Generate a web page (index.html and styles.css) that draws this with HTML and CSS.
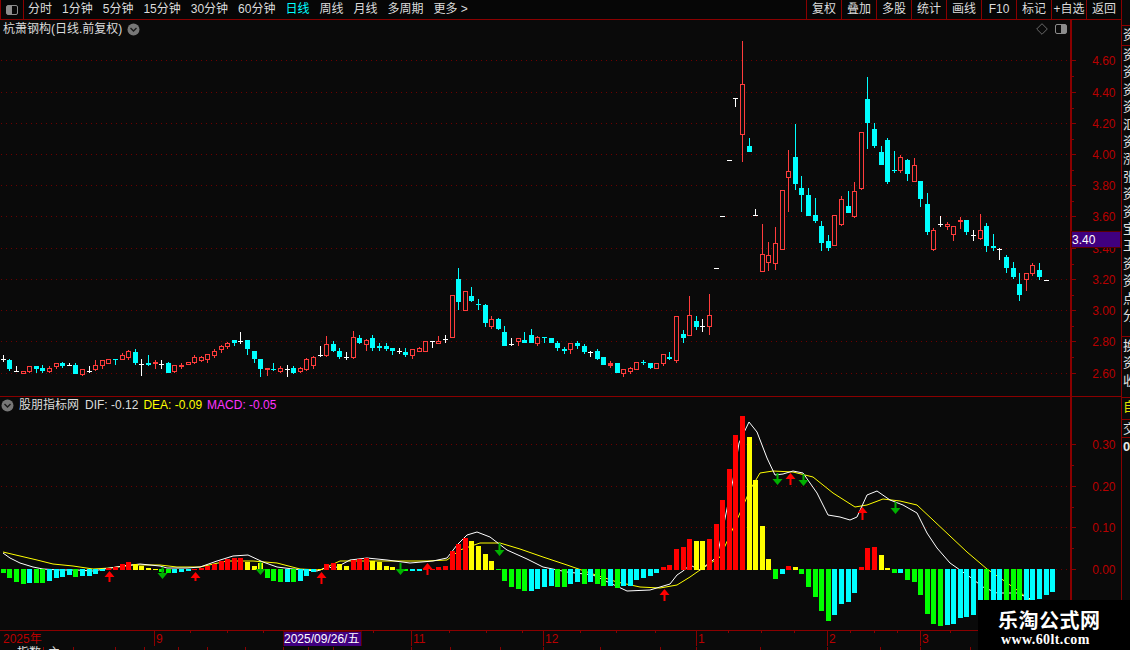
FILE: index.html
```html
<!DOCTYPE html>
<html lang="zh">
<head>
<meta charset="utf-8">
<title>杭萧钢构</title>
<link rel="stylesheet" href="styles.css">
</head>
<body>
<div class="app">
  <div class="left-col">
    <header class="toolbar">
      <div class="tool-icon"><span class="panel-glyph"><span class="panel-fill"></span></span></div>
      <nav class="periods">
        <span>分时</span><span>1分钟</span><span>5分钟</span><span>15分钟</span><span>30分钟</span><span>60分钟</span>
        <span class="active">日线</span><span>周线</span><span>月线</span><span>多周期</span><span>更多 &gt;</span>
      </nav>
      <nav class="actions">
        <span>复权</span><span>叠加</span><span>多股</span><span>统计</span><span>画线</span><span>F10</span><span>标记</span><span>+自选</span><span>返回</span>
      </nav>
    </header>
    <section class="pane pane-main">
      <svg id="priceChart" class="chart" width="1121" height="376" viewBox="0 20 1121 376"></svg>
      <div class="pane-title">
        <span>杭萧钢构(日线.前复权)</span>
        <svg class="chev" width="13" height="13" viewBox="0 0 13 13"><circle cx="6.5" cy="6.5" r="6" class="chev-disc"/><path d="M3.5 5l3 3 3-3" class="chev-mark"/></svg>
      </div>
      <div class="pane-tools">
        <svg width="12" height="12" viewBox="0 0 12 12"><path d="M6 .7L11.3 6 6 11.3.7 6z" class="diamond"/></svg>
        <span class="panel-glyph panel-right"><span class="panel-fill"></span></span>
      </div>
    </section>
    <section class="pane pane-macd">
      <svg id="macdChart" class="chart" width="1121" height="233" viewBox="0 397 1121 233"></svg>
      <div class="pane-title pane-title-macd">
        <svg class="chev" width="13" height="13" viewBox="0 0 13 13"><circle cx="6.5" cy="6.5" r="6" class="chev-disc"/><path d="M3.5 5l3 3 3-3" class="chev-mark"/></svg>
        <span class="ind-name">股朋指标网</span>
        <span>DIF: -0.12</span>
        <span class="dea">DEA: -0.09</span>
        <span class="macd">MACD: -0.05</span>
      </div>
    </section>
    <svg id="timeAxis" class="time-axis" width="1121" height="16" viewBox="0 630 1121 16"></svg>
    <svg id="strip" class="strip" width="1121" height="4" viewBox="0 646 1121 4"></svg>
  </div>
  <aside class="sidebar">
    <div class="side-row side-a"><div class="side-text">资</div></div>
    <div class="side-row side-b"><div class="side-text">资资资资汇资涨张资资宝玉资资点分</div></div>
    <div class="side-row side-c"><div class="side-text">换资收</div></div>
    <div class="side-row side-d"><div class="side-text side-yellow">自</div></div>
    <div class="side-row side-e"><div class="side-text">交</div></div>
    <div class="side-row side-f"><div class="side-zero">0</div></div>
  </aside>
  <div class="watermark">
    <div class="wm-name">乐淘公式网</div>
    <div class="wm-url">www.60lt.com</div>
  </div>
</div>
<script src="chart.js"></script>
</body>
</html>
```
FILE: styles.css
```css
* { box-sizing: border-box; }
html, body { margin: 0; padding: 0; background: #0a0a0a; }
body { font-family: "Liberation Sans", "Noto Sans CJK SC", sans-serif; font-size: 12px; color: #dcdcdc; }
.app { position: relative; display: flex; width: 1130px; height: 650px; overflow: hidden; background: #0a0a0a; }
.left-col { display: flex; flex-direction: column; width: 1121px; flex: none; }

.toolbar { display: flex; align-items: center; height: 20px; border-bottom: 1px solid #8a0000; background: #060606; }
.tool-icon { display: flex; align-items: center; justify-content: center; width: 24px; height: 19px; border-left: 1px solid #8a0000; border-right: 1px solid #8a0000; flex: none; }
.panel-glyph { display: flex; justify-content: flex-start; width: 12px; height: 10px; border: 1px solid #8c8c8c; border-radius: 2px; }
.panel-fill { width: 5px; background: #8c8c8c; }
.panel-right { justify-content: flex-end; }
.periods { display: flex; gap: 10px; padding-left: 4px; white-space: nowrap; line-height: 19px; }
.periods .active { color: #00ffff; }
.actions { display: flex; margin-left: auto; height: 19px; }
.actions span { width: 35px; border-left: 1px solid #8a0000; text-align: center; line-height: 19px; white-space: nowrap; }

.pane { position: relative; flex: none; }
.pane-main { height: 376px; }
.pane-macd { height: 234px; border-top: 1px solid #8a0000; }
.chart { display: block; }
.pane-title { position: absolute; left: 3px; top: 2px; display: flex; align-items: center; gap: 5px; height: 15px; line-height: 15px; white-space: nowrap; }
.pane-title-macd { left: 1px; top: 1px; gap: 5px; }
.ind-name { margin-right: 1px; }
.dea { color: #ffff00; }
.macd { color: #ff33ff; }
.chev-disc { fill: #777777; }
.chev-mark { fill: none; stroke: #1a1a1a; stroke-width: 1.4; }
.pane-tools { position: absolute; right: 54px; top: 3px; display: flex; align-items: center; gap: 7px; }
.diamond { fill: none; stroke: #6a6a6a; stroke-width: 1; }

.time-axis, .strip { display: block; flex: none; }

.sidebar { flex: 1; display: flex; flex-direction: column; padding-top: 25px; border-left: 1px solid #8a0000; overflow: hidden; background: #0a0a0a; }
.side-row { border-top: 1px solid #8a0000; overflow: hidden; flex: none; }
.side-text { width: 13px; font-size: 13px; line-height: 17.4px; color: #e0e0e0; margin-left: 1px; word-break: break-all; }
.side-yellow { color: #e0e000; }
.side-a { height: 20px; }
.side-b { height: 291px; }
.side-c { height: 61px; }
.side-d { height: 22px; }
.side-e { height: 18px; }
.side-f { height: 213px; }
.side-zero { font-weight: bold; font-size: 13px; line-height: 18px; color: #e8e8e8; margin-left: 1px; }

.watermark { position: absolute; left: 978px; top: 600px; width: 152px; height: 50px; background: #000; color: #fff; text-align: left; }
.wm-name { padding-left: 20px; margin-top: 9px; font-family: "Noto Sans CJK SC", sans-serif; font-weight: 700; font-size: 20px; line-height: 22px; letter-spacing: .5px; white-space: nowrap; }
.wm-url { padding-left: 23px; margin-top: 2px; font-family: "Liberation Serif", serif; font-weight: 700; font-size: 14px; line-height: 14px; letter-spacing: .4px; white-space: nowrap; }

/* chart primitives */
.grid { stroke: #6e0000; stroke-width: 1; stroke-dasharray: 1 4; fill: none; }
.axis { stroke: #8a0000; stroke-width: 1; fill: none; shape-rendering: crispEdges; }
.axis-bold { stroke: #8a0000; stroke-width: 2; fill: none; shape-rendering: crispEdges; }
.label { fill: #b80000; font: 12px "Liberation Sans", "Noto Sans CJK SC", sans-serif; }
.tag { fill: #40007f; stroke: #5a0000; shape-rendering: crispEdges; }
.tag-text { fill: #ffffff; font: 12px "Liberation Sans", "Noto Sans CJK SC", sans-serif; }
.wick-r, .wick-s { stroke: #ff3c3c; shape-rendering: crispEdges; }
.wick-c { stroke: #00ffff; shape-rendering: crispEdges; }
.wick-w { stroke: #ffffff; shape-rendering: crispEdges; }
.body-r { fill: #0a0a0a; stroke: #ff3c3c; shape-rendering: crispEdges; }
.body-s { fill: #ff3c3c; shape-rendering: crispEdges; }
.body-c { fill: #00ffff; shape-rendering: crispEdges; }
.body-w { fill: #ffffff; shape-rendering: crispEdges; }
.bar-r { fill: #ff0000; shape-rendering: crispEdges; }
.bar-y { fill: #ffff00; shape-rendering: crispEdges; }
.bar-c { fill: #00ffff; shape-rendering: crispEdges; }
.bar-g { fill: #00ff00; shape-rendering: crispEdges; }
.line-dif { fill: none; stroke: #ffffff; stroke-width: 1; }
.line-dea { fill: none; stroke: #ffff00; stroke-width: 1; }
.arrow-up { fill: #ff0000; }
.arrow-down { fill: #00b000; }
.strip-text { fill: #e0e0e0; font: 12px "Noto Sans CJK SC", sans-serif; }
```
FILE: chart.js
```js
// Candles are transcribed in 3x crop units: type top bottom [high low]
var CANDLES = [
 [330, 'w 88 88 75 95|c 90 117 86 122|w 123 123 108 125|r 124 131|r 109 125 109 129|c 109 117 109 130|c 114 123 106 129|r 114 125 108 130|r 99 110 99 117|c 99 107 96 113|w 105 105 98 108|c 105 132 100 132|r 118 134 118 137|w 124 124 109 129|r 106 120 90 122|r 91 107 91 117|r 87 101|c 88 88 88 105|r 75 89 69 89|r 63 83 59 90|c 66 99 58 104|w 101 101 88 137|c 98 105 75 108|s 96 101 90 117|w 101 101 91 117|c 99 128 96 128|r 106 125 106 130|s 105 110 100 116|r 96 106|r 81 98 75 102|r 82 93 78 96|r 73 90 73 98|r 64 77 58 83|r 48 60 44 70|r 39 50 35 56|c 30 39 30 47|w 33 33 6 41|c 30 57 30 75|c 64 87 64 99|c 87 117 87 141|s 114 119 114 137|c 116 116 99 122|r 114 125 108 130|w 116 116 105 140|c 114 129 108 132|r 114 125 111 128|r 88 119 84 122|r 82 109 79 116|w 76 76 48 80|r 43 78 18 81|c 42 63 33 67|c 63 80 54 87|w 82 82 67 90|r 22 83 3 87|c 24 39 15 42|r 31 45 28 63|c 24 54 15 63'],
 [250, 'c 288 294 279 303|c 288 297 279 303|c 294 303 294 315|w 303 303 294 312|c 306 315 294 321|r 298 318 298 327|r 295 305 291 305|r 274 306|w 274 274 274 294|r 274 282 258 282|w 268 268 255 279|r 136 264|c 87 156 54 180|r 124 183|c 138 153 111 156|c 162 162 147 180|c 165 219 162 231|r 208 231 198 237|c 207 237 204 240|c 246 288 228 288|w 282 282 264 288|r 265 275 265 288|c 270 279 246 279|c 255 279 237 279|r 262 282 258 288|c 262 262 262 279|c 264 279|c 279 294 273 303|c 297 302 291 312|r 280 300 280 312|c 279 288 273 297|c 288 306 282 312|w 306 306 303 321|c 303 327 297 330|c 321 345|s 340 347 333 354|c 339 369|r 358 372 358 381|r 355 365 351 372|r 337 359|c 337 337 330 345|c 339 354 339 357|r 340 356|r 313 342 313 348|c 321 327 306 330|r 199 332 199 339|c 252 264 240 279|r 196 257 138 257|c 213 231 198 240|w 229 229 207 246|r 196 230 132 255|w 55 55'],
 [30, 'w 559 559|w 391 391|w 205 205 205 231|r 163 314 33 396|c 348 366 324 366|w 556 556 537 557|r 673 725 582 725|r 676 698 636 723|r 640 701 591 720|r 481 659|r 424 443 360 546|c 381 462 282 480|c 474 495 438 546|c 495 558 474 558|c 555 573 504 579|c 588 639 573 663|c 633 654 615 663|r 556 647|r 508 584 498 588|c 528 549 483 549|r 484 560 456 564|r 307 476 307 480|c 207 279 141 357|c 297 348 279 354'],
 [70, 'c 246 285 228 285|c 210 336 204 342|c 301 301 243 309|r 262 303 255 309|c 270 312 267 333|r 286 335 264 335|c 333 387 333 411|c 402 486 369 495|r 481 540 474 543|w 461 461 438 471|r 463 472 457 480|r 469 495 469 513|s 450 456 441 477|c 450 486 450 495|w 495 495 480 513|r 481 507 432 510|c 468 528 459 546|c 528 534 492 543|w 537 537 534 570|c 561 594 555 609|c 594 621 576 627|c 642 675 609 693|r 610 629 610 663|r 586 611 579 618|c 600 621 579 630|w 631 631']
];

var BARS = 'g-11 g-26 g-38 g-44 c-41 g-41 g-41 c-35 c-26 c-23 c-17 g-23 c-20 c-20 c-14 c-6 r6 r9 r18 r24 y18 y12 y5 y2 g-9 g-12 c-12 c-9 c-6 r3 r6 r12 r18 r27 r33 r36 r36 y24 y12 y21 g-27 g-36 g-39 c-39 g-39 c-36 c-21 c-9 y2 r18 r21 y18 y12 r30 r33 r36 y27 y24 y12 y9 g-2 g-5 c-6 c-6 r2 r3 r9 r12 r58 r78 r96 y88 y73 y48 y26 g-2 g-37 g-55 g-60 g-67 c-67 c-60 c-54 c-50 g-54 g-55 c-45 c-40 g-44 c-40 g-45 g-50 c-52 g-58 c-52 c-50 c-32 c-26 c-20 c-12 r10 r15 r62 r68 r92 y88 y86 r92 r137 r209 r302 r404 r461 y398 y269 y131 y32 g-30 c-15 r11 y8 g-15 g-55 g-85 g-127 g-157 c-139 c-106 c-100 c-73 r8 r65 r68 y44 y5 g-13 c-13 g-34 g-40 g-79 g-136 g-166 g-172 c-169 c-164 c-146 c-143 c-137 c-100 g-100 c-100 c-100 g-100 g-100 g-100 c-100 c-100 c-89 c-77 c-68'.split(' ');

var DIF = [[3,553],[10,558],[20,563],[33,567],[43,569],[60,570],[77,570],[93,571],[110,568],[123,566],[140,564],[160,566],[167,568],[187,568],[200,567],[217,561],[233,556],[248,555],[263,562],[277,567],[293,569],[317,571],[323,569],[328,566],[333,569],[350,560],[367,558],[387,560],[410,563],[433,561],[447,558],[457,545],[467,535],[477,532],[490,537],[507,550],[527,559],[543,567],[567,572],[593,575],[610,583],[627,591],[650,590],[670,584],[677,575],[683,571],[690,565],[700,570],[717,557],[733,480],[739,443],[749,422],[757,432],[767,458],[775,475],[783,474],[793,471],[803,473],[817,493],[828,515],[840,517],[850,520],[857,517],[867,495],[877,491],[890,500],[903,505],[917,513],[927,533],[937,548],[950,563],[960,570],[970,577],[983,587],[997,593],[1017,593],[1033,600]];
var DEA = [[3,552],[20,556],[37,560],[53,564],[73,566],[93,569],[110,568],[133,565],[160,565],[177,567],[200,567],[227,561],[253,561],[277,563],[300,569],[320,570],[340,561],[350,561],[367,561],[387,561],[427,561],[447,560],[460,550],[480,543],[500,543],[520,549],[543,557],[567,565],[590,573],[617,582],[640,587],[660,588],[677,585],[690,577],[700,570],[720,557],[740,513],[750,490],[760,473],[773,471],[793,472],[813,477],[833,493],[855,507],[867,505],[883,499],[900,501],[917,505],[933,520],[950,536],[967,552],[987,569],[1003,580],[1017,590],[1030,600]];

var UP = [[109,571,582],[195,572,581],[321,572,584],[427,563,575],[664,589,601],[790,473,485],[862,507,520]];
var DOWN = [[162,567,579],[260,562,575],[400,563,575],[499,543,556],[777,473,485],[803,474,486],[895,502,514]];

var PRICE_TICKS = [['4.60',60],['4.40',92],['4.20',123],['4.00',154],['3.80',185],['3.60',216],['3.40',248],['3.20',279],['3.00',310],['2.80',341],['2.60',373]];
var MACD_TICKS = [['0.30',444],['0.20',486],['0.10',527],['0.00',569]];

function left(i) { return Math.round(0.8 + 6.6 * i); }
function line(x1, y1, x2, y2, c) { return '<line x1="' + x1 + '" y1="' + y1 + '" x2="' + x2 + '" y2="' + y2 + '" class="' + c + '"/>'; }
function rect(x, y, w, h, c) { return '<rect x="' + x + '" y="' + y + '" width="' + w + '" height="' + h + '" class="' + c + '"/>'; }
function text(x, y, s, c, end) { return '<text x="' + x + '" y="' + y + '" class="' + c + '"' + (end ? ' text-anchor="end"' : '') + '>' + s + '</text>'; }

function axis(ticks, bottom, top) {
  var s = '';
  ticks.forEach(function (t, k) {
    var y = t[1] + 0.5;
    s += line(1, y, 1068, y, 'grid');
    s += line(1071, y, 1076, y, 'axis');
    if (k < ticks.length - 1) { var m = Math.round((t[1] + ticks[k + 1][1]) / 2) + 0.5; s += line(1071, m, 1074, m, 'axis'); }
    s += text(1115.5, t[1] + 4.5, t[0], 'label', true);
  });
  s += line(1070.5, top, 1070.5, bottom, 'axis-bold');
  return s;
}

function price() {
  var s = axis(PRICE_TICKS, 396, 20), i = 0;
  CANDLES.forEach(function (g) {
    g[1].split('|').forEach(function (row) {
      var p = row.split(' '), t = p[0];
      var conv = function (z) { return Math.round(g[0] + z / 3); };
      var top = conv(+p[1]), bot = conv(+p[2]);
      var hi = p[3] ? conv(+p[3]) : top, lo = p[4] ? conv(+p[4]) : bot;
      var x = left(i);
      s += line(x + 2.5, hi, x + 2.5, lo, 'wick-' + t);
      if (t === 'r') s += rect(x + 0.5, top + 0.5, 4, Math.max(bot - top - 1, 1), 'body-r');
      else s += rect(x, top, 5, Math.max(bot - top, 1), 'body-' + t);
      i++;
    });
  });
  s += rect(1071.5, 231.5, 49, 16, 'tag') + text(1072, 244, '3.40', 'tag-text');
  return s;
}

function poly(pts, c) { return '<polyline class="' + c + '" points="' + pts.map(function (p) { return p.join(','); }).join(' ') + '"/>'; }

function arrow(a, up) {
  var x = a[0] + 0.5, tip = up ? a[1] : a[2], dir = up ? 1 : -1, neck = tip + dir * 6, tail = up ? a[2] : a[1];
  var pts = [[x, tip], [x + 5, neck], [x + 1, neck], [x + 1, tail], [x - 1, tail], [x - 1, neck], [x - 5, neck]];
  return '<polygon class="' + (up ? 'arrow-up' : 'arrow-down') + '" points="' + pts.map(function (p) { return p.join(','); }).join(' ') + '"/>';
}

function macd() {
  var s = axis(MACD_TICKS, 630, 397);
  s += poly(DEA, 'line-dea') + poly(DIF, 'line-dif');
  BARS.forEach(function (b, i) {
    var v = +b.slice(1), x = left(i), h = Math.max(Math.round(Math.abs(v) / 3), 1);
    s += v >= 0 ? rect(x, 570 - h, 5, h, 'bar-' + b[0]) : rect(x, 569, 5, h, 'bar-' + b[0]);
  });
  UP.forEach(function (a) { s += arrow(a, true); });
  DOWN.forEach(function (a) { s += arrow(a, false); });
  return s;
}

function timeAxis() {
  var s = line(0, 630.5, 1121, 630.5, 'axis') + line(0, 646.5, 1121, 646.5, 'axis');
  [[154, '9'], [411, '11'], [543, '12'], [696, '1'], [827, '2'], [920, '3']].forEach(function (m) {
    s += line(m[0] + 0.5, 631, m[0] + 0.5, 646, 'axis') + text(m[0] + 2, 643, m[1], 'label');
  });
  [190, 227, 263, 335, 373, 449, 486, 522, 580, 616, 655, 728, 761, 794, 850, 874, 897, 950, 985].forEach(function (x) {
    s += line(x + 0.5, 631, x + 0.5, 633, 'axis');
  });
  s += text(3, 643, '2025年', 'label');
  s += rect(283, 631, 78, 15, 'tag') + text(284, 643, '2025/09/26/五', 'tag-text');
  return s;
}

function strip() {
  var s = '';
  [43, 73, 115, 144, 178, 207, 245, 283, 308, 333, 411, 450, 500, 543, 600, 660, 696, 760, 827, 880, 920, 970].forEach(function (x) {
    s += line(x + 0.5, 647, x + 0.5, 650, 'axis');
  });
  s += text(17, 657, '指数', 'strip-text') + text(48, 657, '主', 'strip-text') + text(825, 657, '一', 'strip-text');
  return s;
}

document.getElementById('priceChart').innerHTML = price();
document.getElementById('macdChart').innerHTML = macd();
document.getElementById('timeAxis').innerHTML = timeAxis();
document.getElementById('strip').innerHTML = strip();
```
